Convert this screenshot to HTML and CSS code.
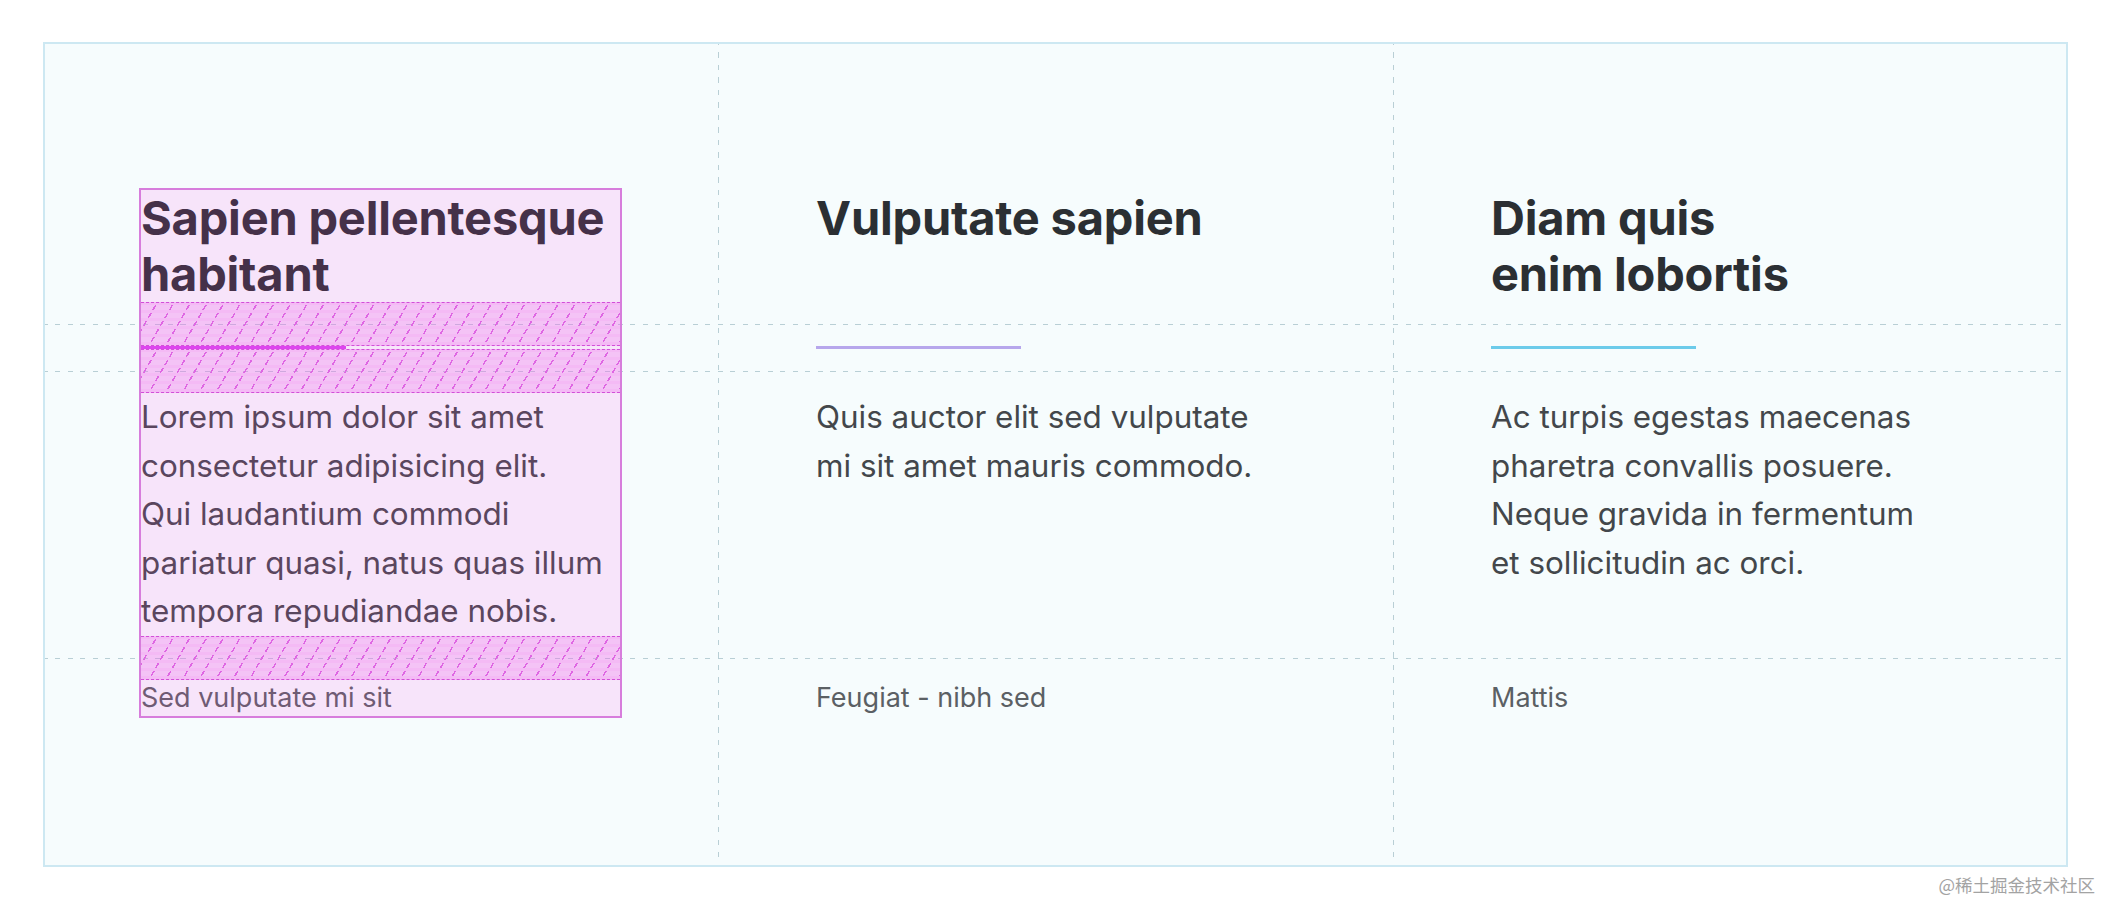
FILE: index.html
```html
<!DOCTYPE html>
<html lang="en">
<head>
<meta charset="utf-8">
<title>Features</title>
<link rel="stylesheet" href="styles.css">
</head>
<body>
<main class="page">
  <section class="features">
    <article class="card card--inspected">
      <h2 class="card__title">Sapien pellentesque habitant</h2>
      <span class="card__rule card__rule--pink"></span>
      <p class="card__text">Lorem ipsum dolor sit amet<br>consectetur adipisicing elit.<br>Qui laudantium commodi<br>pariatur quasi, natus quas illum<br>tempora repudiandae nobis.</p>
      <p class="card__meta">Sed vulputate mi sit</p>
    </article>
    <article class="card">
      <h2 class="card__title">Vulputate sapien</h2>
      <span class="card__rule card__rule--violet"></span>
      <p class="card__text">Quis auctor elit sed vulputate<br>mi sit amet mauris commodo.</p>
      <p class="card__meta">Feugiat - nibh sed</p>
    </article>
    <article class="card">
      <h2 class="card__title">Diam quis<br>enim lobortis</h2>
      <span class="card__rule card__rule--blue"></span>
      <p class="card__text">Ac turpis egestas maecenas<br>pharetra convallis posuere.<br>Neque gravida in fermentum<br>et sollicitudin ac orci.</p>
      <p class="card__meta">Mattis</p>
    </article>
  </section>
  <div class="watermark">@稀土掘金技术社区</div>
</main>
</body>
</html>
```

FILE: styles.css
```css
html, body {
  margin: 0;
  background: #ffffff;
}

.page {
  padding: 42px 36px 0 43px;
  font-family: Inter, "Noto Sans", sans-serif;
}

.features {
  position: relative;
  overflow: hidden;
  display: grid;
  grid-template-columns: repeat(3, 1fr);
  grid-template-rows: auto 3px auto auto;
  column-gap: 196px;
  row-gap: 44px;
  padding: 146px 96px 149px;
  background: #f6fcfd;
  border: 2px solid #cde8f2;
}

.card {
  position: relative;
  display: grid;
  grid-row: span 4;
  grid-template-rows: subgrid;
  color: #2d3135;
}

/* grid overlay: vertical column-gap lines */
.card + .card::before {
  content: "";
  position: absolute;
  left: -98px;
  top: -200px;
  bottom: -200px;
  width: 1px;
  background: repeating-linear-gradient(180deg, #b9cfd5 0 5px, transparent 5px 12.5px);
}

.card__title {
  position: relative;
  margin: 0;
  font-size: 47px;
  line-height: 56px;
  font-weight: 700;
  letter-spacing: -0.2px;
  color: #2b2f33;
}

.card__rule {
  position: relative;
  display: block;
  height: 3px;
  background-repeat: no-repeat;
  background-size: 205px 3px;
}

.card__rule--pink { background-image: linear-gradient(#d946ef, #d946ef); }
.card__rule--violet { background-image: linear-gradient(#b7a7ec, #b7a7ec); }
.card__rule--blue { background-image: linear-gradient(#6ccbea, #6ccbea); }

.card__text {
  position: relative;
  margin: 0;
  font-size: 31.4px;
  line-height: 48.6px;
  color: #43474b;
}

.card__meta {
  margin: 0;
  font-size: 27px;
  line-height: 36px;
  color: #5b6064;
}

/* grid overlay: horizontal row-gap lines */
.card__title::before,
.card__rule::before,
.card__text::before {
  content: "";
  position: absolute;
  left: -98px;
  right: -98px;
  top: calc(100% + 22px);
  height: 1px;
  background: repeating-linear-gradient(90deg, #b9cfd5 0 5px, transparent 5px 12.5px);
}

/* inspected element highlight */
.card--inspected::after {
  content: "";
  position: absolute;
  inset: 0;
  background: rgba(255, 60, 235, 0.125);
  outline: 2px solid #d77ddc;
  pointer-events: none;
}

.card--inspected .card__title::after,
.card--inspected .card__rule::after,
.card--inspected .card__text::after {
  content: "";
  position: absolute;
  left: 0;
  right: 0;
  top: 100%;
  height: 44px;
  box-sizing: border-box;
  border-top: 1px dashed #d24fd8;
  border-bottom: 1px dashed #d24fd8;
  background:
    repeating-linear-gradient(0deg, rgba(244, 186, 245, 1) 0 3px, transparent 3px 8px),
    repeating-linear-gradient(120deg, transparent 0 13px, #df66e3 13px 14.5px),
    rgba(240, 120, 238, 0.3);
  z-index: 1;
}

.watermark {
  text-align: right;
  margin-right: -27px;
  padding: 5px 0 0 0;
  font-family: "Noto Sans CJK SC", sans-serif;
  font-size: 17.5px;
  line-height: 26px;
  color: #a3a3a3;
}
```
